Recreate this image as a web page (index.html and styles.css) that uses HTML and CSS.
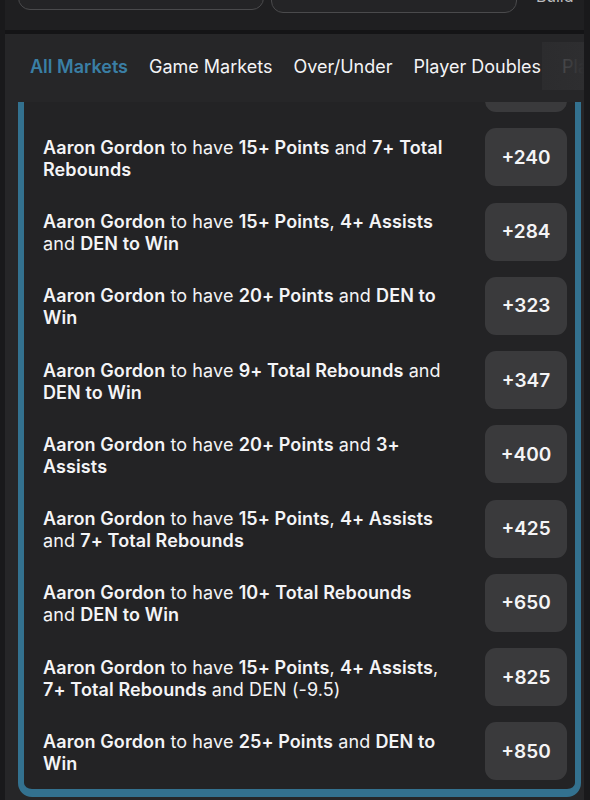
FILE: index.html
```html
<!DOCTYPE html>
<html lang="en">
<head>
    <meta charset="UTF-8">
    <meta name="viewport" content="width=device-width, initial-scale=1.0">
    <title>Player Markets</title>
    <link rel="stylesheet" href="styles.css">
</head>
<body>

<div class="app">
    <div class="header">
        <div class="field field-left"></div>
        <div class="field field-right"></div>
        <span class="build">Build</span>
    </div>
    <div class="divider"></div>

    <div class="tabs">
        <span class="tab active">All Markets</span>
        <span class="tab">Game Markets</span>
        <span class="tab">Over/Under</span>
        <span class="tab">Player Doubles</span>
        <span class="tab">Player Props</span>
        <div class="tabs-fade"></div>
    </div>

    <div class="scroll">
        <div class="card">
            <div class="row">
                <div class="desc"><b>Aaron Gordon</b> to have <b>10+ Points</b> and <b>5+ Total Rebounds</b></div>
                <div class="odds">+210</div>
            </div>
            <div class="row">
                <div class="desc"><b>Aaron Gordon</b> to have <b>15+ Points</b> and <b>7+ Total Rebounds</b></div>
                <div class="odds">+240</div>
            </div>
            <div class="row">
                <div class="desc"><b>Aaron Gordon</b> to have <b>15+ Points</b>, <b>4+ Assists</b> and <b>DEN to Win</b></div>
                <div class="odds">+284</div>
            </div>
            <div class="row">
                <div class="desc"><b>Aaron Gordon</b> to have <b>20+ Points</b> and <b>DEN to Win</b></div>
                <div class="odds">+323</div>
            </div>
            <div class="row">
                <div class="desc"><b>Aaron Gordon</b> to have <b>9+ Total Rebounds</b> and <b>DEN to Win</b></div>
                <div class="odds">+347</div>
            </div>
            <div class="row">
                <div class="desc"><b>Aaron Gordon</b> to have <b>20+ Points</b> and <b>3+ Assists</b></div>
                <div class="odds">+400</div>
            </div>
            <div class="row">
                <div class="desc"><b>Aaron Gordon</b> to have <b>15+ Points</b>, <b>4+ Assists</b> and <b>7+ Total Rebounds</b></div>
                <div class="odds">+425</div>
            </div>
            <div class="row">
                <div class="desc"><b>Aaron Gordon</b> to have <b>10+ Total Rebounds</b> and <b>DEN to Win</b></div>
                <div class="odds">+650</div>
            </div>
            <div class="row">
                <div class="desc"><b>Aaron Gordon</b> to have <b>15+ Points</b>, <b>4+ Assists</b>, <b>7+ Total Rebounds</b> and DEN (-9.5)</div>
                <div class="odds">+825</div>
            </div>
            <div class="row">
                <div class="desc"><b>Aaron Gordon</b> to have <b>25+ Points</b> and <b>DEN to Win</b></div>
                <div class="odds">+850</div>
            </div>
        </div>
    </div>
</div>

</body>
</html>
```

FILE: styles.css
```css
html, body {
    height: 100%;
}
body {
    margin: 0;
    background-color: #19191b;
    font-family: Inter, 'Noto Sans', sans-serif;
    color: #f4f4f6;
    overflow: hidden;
}
.app {
    margin: 0 6px 0 5px;
    height: 100%;
    background-color: #262628;
    display: flex;
    flex-direction: column;
}
.header {
    height: 30px;
    flex-shrink: 0;
    background-color: #1f1f21;
    display: flex;
    align-items: flex-end;
    gap: 7px;
    padding: 0 0 0 13px;
    overflow: hidden;
}
.field {
    width: 244px;
    height: 40px;
    border: 1.5px solid #4a4a4c;
    border-radius: 12px;
    background-color: #242426;
    flex-shrink: 0;
}
.field-left {
    margin-bottom: 20px;
}
.field-right {
    margin-bottom: 17px;
}
.build {
    margin-left: 12px;
    margin-bottom: 26px;
    font-size: 16px;
    line-height: 16px;
    color: #bbbbbd;
}
.divider {
    height: 4px;
    flex-shrink: 0;
    background-color: #141416;
}
.tabs {
    position: relative;
    height: 68px;
    flex-shrink: 0;
    display: flex;
    align-items: center;
    gap: 21px;
    padding: 0 0 4px 25px;
    box-sizing: border-box;
    font-size: 18px;
    white-space: nowrap;
    overflow: hidden;
    background-color: #262628;
}
.tab {
    color: #f4f4f6;
}
.tab.active {
    color: #3a7fa5;
    font-weight: 600;
}
.tabs-fade {
    position: absolute;
    top: 8px;
    right: 0;
    bottom: 12px;
    width: 42px;
    background: linear-gradient(to right, rgba(46, 46, 48, 0.75), rgba(46, 46, 48, 1));
}
.scroll {
    flex: 1;
    overflow: hidden;
    padding: 0 3px 0 13px;
}
.card {
    margin-top: -68px;
    border: 6px solid #33718f;
    border-bottom-width: 8px;
    border-radius: 14px;
    background-color: #232325;
    padding: 14px 8px 9px 19px;
    display: flex;
    flex-direction: column;
    gap: 16.25px;
}
.row {
    display: flex;
    align-items: center;
}
.desc {
    flex: 1;
    margin-right: 41px;
    padding-top: 3px;
    font-size: 18px;
    line-height: 22px;
    letter-spacing: 0.1px;
    font-weight: 400;
}
.desc b {
    font-weight: 600;
}
.odds {
    width: 82px;
    height: 58px;
    flex-shrink: 0;
    border-radius: 11px;
    background-color: #3a3a3c;
    display: flex;
    align-items: center;
    justify-content: center;
    font-size: 19px;
    font-weight: 600;
}
```
